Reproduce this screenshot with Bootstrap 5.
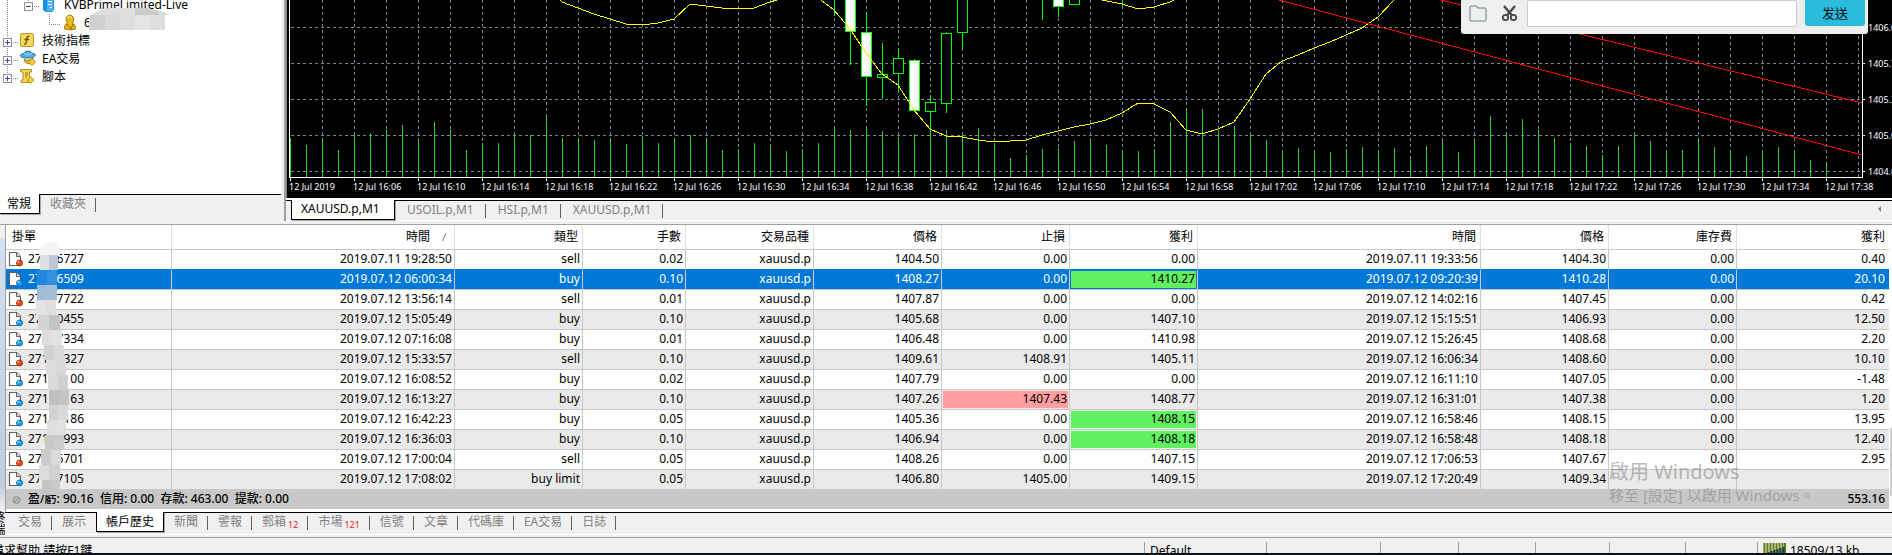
<!DOCTYPE html>
<html lang="zh-Hant">
<head>
<meta charset="utf-8">
<meta name="viewport" content="width=device-width, initial-scale=1">
<title>Trading terminal</title>
<link rel="stylesheet" href="https://cdn.jsdelivr.net/npm/bootstrap@5.3.0/dist/css/bootstrap.min.css">
<style>
  body { font: 12px/18px "Noto Sans", "Noto Sans CJK TC", sans-serif; color: #000; background: #f0f0f0; overflow: hidden; }
  a { color: inherit; text-decoration: none; }

  /* navigator */
  .navigator { width: 286px; border-right: 2px solid #a0a0a0; }
  .tree { height: 194px; width: 281px; background: #fff; overflow: hidden; }
  .tree ul { margin: -4px 0 0; }
  .tree li { height: 18px; display: flex; align-items: center; }
  .tree svg { flex: none; }
  .tree-name { margin-left: 6px; }
  .smear { left: 89px; top: 7px; }

  /* tab strips */
  .strip { border-top: 1px solid #000; color: #808080; }
  .strip a { position: relative; white-space: nowrap; }
  .strip a.idle::after { content: ""; position: absolute; right: 0; top: 3px; height: 14px; border-right: 1px solid #606060; }
  .strip a.current { color: #000; background: #fff; border: 1px solid #000; border-top: 0; margin-top: -1px; box-shadow: 1px 1px 0 #a8a8a8; }
  .nav-strip { width: 281px; height: 24px; }
  .nav-strip a { padding: 0 10px; height: 20px; line-height: 18px; }
  .nav-strip a.current { padding: 0 8px 0 7px; border-left: 0; line-height: 20px; }
  .chart-strip { height: 20px; padding-left: 5px; }
  .chart-strip a { padding: 0 12px; height: 18px; }
  .chart-strip a.current { padding: 0 12px 0 9px; height: 20px; width: 104px; }
  .term-strip { height: 23px; padding-left: 3px; border-bottom: 1px solid #fff; }
  .term-strip a { padding: 0 10px; height: 20px; line-height: 18px; }
  .term-strip a.current { line-height: 20px; padding: 0 9px; }
  .term-strip sub { color: #f01818; font-size: 9px; bottom: -2px; margin-left: 2px; }
  .arrow { right: 11px; top: 5px; border: 3px solid transparent; border-left: 0; border-right-color: #808080; }

  /* chart */
  .chart { background: #000; height: 198px; overflow: hidden; }
  .chart text { font-size: 9px; fill: #fff; }
  .sender { right: 24px; top: 0; width: 407px; height: 34px; padding: 0 3px 0 8px; background: #edf0ef; border-radius: 0 0 3px 3px; }
  .sender input { width: 270px; height: 27px; border: 1px solid #ccc; border-radius: 2px; background: #fff; margin-left: 8px; }
  .sender button { width: 60px; height: 26px; margin-left: 8px; border: 0; border-radius: 0 0 3px 3px; background: #2abcdc; font: 13px/24px "Noto Sans CJK SC", sans-serif; padding: 0; color: #111; }
  .sender .tool { width: 18px; padding: 0; border: 0; background: none; margin: 0 14px 0 0; height: 26px; }
  .sender .tool svg { display: block; }
  .sender .tool + .tool { margin-right: 0; }

  /* terminal */
  .terminal { border-top: 1px solid #a0a0a0; margin-top: 3px; }
  .caption { width: 5px; background: linear-gradient(#f0f0f0 13px, #d4e0f0 14px, #c0ccdb 260px, #f0f0f0 285px); overflow: hidden; }
  .caption span { position: absolute; bottom: 0; left: -9px; writing-mode: vertical-rl; font-size: 12px; line-height: 14px; }
  .history { background: #fff; border-left: 1px solid #a0a0a0; padding: 0 3px 3px 0; }
  .history table { table-layout: fixed; width: 100%; border-collapse: separate; border-spacing: 0; margin: 0; }
  .history th { height: 25px; font-weight: 400; padding: 0 4px 0 0; text-align: right; border-right: 1px solid #e0e0e0; border-bottom: 1px solid #c8c8c8; white-space: nowrap; }
  .history th:first-child { text-align: left; padding-left: 6px; }
  .history td { height: 20px; line-height: 18px; padding: 0 2px 1px 0; text-align: right; border-right: 1px solid #c8c8c8; border-bottom: 1px solid #c8c8c8; white-space: nowrap; }
  .history td:last-child, .history th:last-child { border-right: 0; padding-right: 4px; }
  .history tbody tr:nth-child(even) td { background: #eaeaea; }
  .history tbody tr.above td { border-bottom-color: #0078d7; }
  .history tbody tr.picked td { background: #0078d7; color: #fff; }
  .history tbody tr td.gain { background: #60f060; color: #000; box-shadow: inset 0 0 0 1px #e4f8e4; }
  .history tbody tr.picked td.gain { background: #60f060; color: #000; box-shadow: inset 0 0 0 1px #0078d7; }
  .history tbody tr td.loss { background: #ff9f9f; box-shadow: inset 0 0 0 1px #f6e4e4; }
  .history tfoot td { background: #c8c8c8; border: 0; height: 19px; font-weight: 500; }
  .history tfoot pre { font: inherit; margin: 0; overflow: visible; }
  .ticket { width: 56px; }
  .sorter { width: 20px; height: 10px; vertical-align: -1px; }
  .streak { left: 30px; top: 16px; }
  .activate { left: 1609px; top: 233px; color: rgba(120,120,120,.5); font-size: 20px; line-height: 28px; pointer-events: none; white-space: nowrap; }
  .activate small { display: block; font-size: 15px; line-height: 18px; }
  .thumb { right: 0; top: 203px; width: 2px; height: 68px; background: #cdcdcd; }

  /* status bar */
  .status { height: 18px; margin-top: 2px; border-top: 1px solid #a0a0a0; border-bottom: 2px solid #0c1218; overflow: hidden; }
  .status > div { border-left: 1px solid #a0a0a0; margin-top: 4px; height: 18px; padding-left: 5px; white-space: nowrap; flex: none; }
  .status > div:first-child { border: 0; padding: 0; text-indent: -8px; flex: 1 1 0; }
</style>
</head>
<body>
<main class="d-flex flex-column">
  <div class="d-flex">
    <aside class="navigator flex-shrink-0">
      <div class="tree position-relative">
        <ul class="list-unstyled">
          <li><svg width="58" height="18"><path d="M7.5 4V18M28.5 4V6" stroke="#888" stroke-dasharray="1 1"/><path d="M34 10.500H40" stroke="#888" stroke-dasharray="1 1"/><rect x="24.500" y="6.500" width="8" height="8" fill="#fff" stroke="#909090"/><path d="M26 10.500H31" stroke="#3050a0"/><path d="M43 3L46 1H54V14L52 16H46L43 14Z" fill="#1a8fe0"/><path d="M47 2H53V15H47Z" fill="#4cb4f4"/><path d="M48 5.500H52M48 8.500H52M50 11.500H52" stroke="#e8f6ff"/></svg><span class="tree-name">KVBPrimeLimited-Live</span></li>
          <li><svg width="78" height="18"><path d="M7.500 0V18M49.500 0V10.500H61" fill="none" stroke="#888" stroke-dasharray="1 1"/><path d="M64.500 15Q64 10 67.500 9Q65 6 66.500 3Q70 -1 73 3Q74.500 6 72.500 9Q76 10 75.500 15Q70 17 64.500 15Z" fill="#e8bc20" stroke="#a87c08"/><path d="M67 4Q70 1 72 4" stroke="#fff0a0" fill="none"/><path d="M67 10L71 15L73 10" stroke="#8c6800" fill="none"/></svg><span class="tree-name">6</span></li>
          <li><svg width="36" height="18"><path d="M7.500 0V18M13 10.500H19" stroke="#888" stroke-dasharray="1 1"/><rect x="3.500" y="6.500" width="8" height="8" fill="#fff" stroke="#909090"/><path d="M5 10.500H10M7.500 8V13" stroke="#3050a0"/><rect x="20.500" y="1.500" width="13" height="13" rx="1.500" fill="#f5d860" stroke="#c09a20"/><path d="M29.500 4.500Q27.500 3.500 27 6L26 11Q25.500 12.500 24 12M24.500 7.500H29" fill="none" stroke="#705000" stroke-width="1.300"/></svg><span class="tree-name">技術指標</span></li>
          <li><svg width="36" height="18"><path d="M7.500 0V18M13 10.500H19" stroke="#888" stroke-dasharray="1 1"/><rect x="3.500" y="6.500" width="8" height="8" fill="#fff" stroke="#909090"/><path d="M5 10.500H10M7.500 8V13" stroke="#3050a0"/><path d="M24 9Q28 12 33 8L32 13Q28 15 25 12Z" fill="#e8c030" stroke="#a88010"/><path d="M20 5.500Q21 8 28 8Q35 8 35.500 4.500Q34 3 32 3.500Q31 1 28 1Q25 1 24 3.500Q21 3.500 20 5.500Z" fill="#50b0e0" stroke="#2478a8"/><path d="M24.500 3.500Q28 6 32 3.500" fill="none" stroke="#a8e0f8"/><path d="M32 8.500L35.500 12L32 15.500L28.500 12Z" fill="#f4d040" stroke="#b08808"/></svg><span class="tree-name">EA交易</span></li>
          <li><svg width="36" height="18"><path d="M7.500 0V6M13 10.500H19" stroke="#888" stroke-dasharray="1 1"/><rect x="3.500" y="6.500" width="8" height="8" fill="#fff" stroke="#909090"/><path d="M5 10.500H10M7.500 8V13" stroke="#3050a0"/><path d="M20.500 1.500H31.500V4H29.500V11H31V14.500H21V12H23V4H20.500Z" fill="#f5d860" stroke="#b89020"/><path d="M25 5H28M25 7H28M25 9H27" stroke="#907000"/><path d="M30.500 8.500L34 12L30.500 15.500L27 12Z" fill="#f4d040" stroke="#b08808"/></svg><span class="tree-name">腳本</span></li>
        </ul>
        <svg class="smear position-absolute" width="84" height="26"><path d="M1 10Q8 1 22 1H56Q74 3 81 8H76V23H1V26H0V8Z" fill="#dedede"/><path d="M1 8H16V23H1Z" fill="#d0d0d2"/><path d="M16 8H31V23H16Z" fill="#d8d8d6"/><path d="M46 1H56L70 4V8H46Z" fill="#cccccf"/><path d="M46 8H61V23H46Z" fill="#e6e4e6"/></svg>
      </div>
      <nav class="strip nav-strip d-flex">
        <a class="current" href="#">常規</a><a class="idle" href="#">收藏夾</a>
      </nav>
    </aside>

    <section class="flex-grow-1 overflow-hidden">
      <div class="chart position-relative">
        <svg id="plot" class="d-block w-100" height="198" viewBox="286 0 1606 198" preserveAspectRatio="xMaxYMin slice" shape-rendering="crispEdges"></svg>
        <form class="sender position-absolute d-flex">
          <button class="tool" type="button" aria-label="Folder"><svg width="18" height="26"><path d="M1 8Q1 6 3 6H7L9 8H15.500Q17 8 17 10V19.500Q17 21 15.500 21H3Q1 21 1 19.500Z" fill="none" stroke="#98a4ac" stroke-width="1.600"/></svg></button>
          <button class="tool" type="button" aria-label="Cut"><svg width="18" height="26"><path d="M3 6L11.500 16M14 6L5.500 16" stroke="#484848" stroke-width="2.400" fill="none"/><circle cx="4.500" cy="17.500" r="2.700" fill="none" stroke="#484848" stroke-width="1.800"/><circle cx="12.500" cy="17.500" r="2.700" fill="none" stroke="#484848" stroke-width="1.800"/></svg></button>
          <input type="text" aria-label="訊息">
          <button type="button">发送</button>
        </form>
      </div>
      <div class="bg-white" style="height:2px"></div>
      <nav class="strip chart-strip d-flex position-relative">
        <a class="current" href="#">XAUUSD.p,M1</a><a class="idle" href="#">USOIL.p,M1</a><a class="idle" href="#">HSI.p,M1</a><a class="idle" href="#">XAUUSD.p,M1</a>
        <span class="arrow position-absolute"></span>
      </nav>
      <div class="bg-white" style="height:1px"></div>
    </section>
  </div>

  <section class="terminal d-flex position-relative">
    <div class="caption position-relative flex-shrink-0"><span>終端</span></div>
    <div class="flex-grow-1 overflow-hidden">
      <div class="history position-relative">
        <table>
          <colgroup><col style="width:166px"><col><col style="width:128px"><col style="width:103px"><col style="width:128px"><col style="width:128px"><col style="width:128px"><col style="width:128px"><col style="width:283px"><col style="width:128px"><col style="width:128px"><col style="width:152px"></colgroup>
          <thead><tr><th>掛單</th><th>時間<svg class="sorter"><path d="M12.500 9L16 1" stroke="#808080"/></svg></th><th>類型</th><th>手數</th><th>交易品種</th><th>價格</th><th>止損</th><th>獲利</th><th>時間</th><th>價格</th><th>庫存費</th><th>獲利</th></tr></thead>
          <tbody id="deals"></tbody>
          <tfoot><tr><td colspan="11"><div class="d-flex align-items-center"><svg width="22" height="18"><circle cx="10.500" cy="10" r="3.500" fill="#b8b8b8" stroke="#909090"/><path d="M8 12.500L13 7.500" stroke="#909090"/></svg><pre>盈/虧: 90.16  信用: 0.00  存款: 463.00  提款: 0.00</pre></div></td><td>553.16</td></tr></tfoot>
        </table>
      </div>
      <nav class="strip term-strip d-flex">
        <a class="idle" href="#">交易</a><a href="#">展示</a><a class="current" href="#">帳戶歷史</a><a class="idle" href="#">新聞</a><a class="idle" href="#">警報</a><a class="idle" href="#">郵箱<sub>12</sub></a><a class="idle" href="#">市場<sub>121</sub></a><a class="idle" href="#">信號</a><a class="idle" href="#">文章</a><a class="idle" href="#">代碼庫</a><a class="idle" href="#">EA交易</a><a class="idle" href="#">日誌</a>
      </nav>
    </div>
    <svg class="streak position-absolute" id="streak" width="45" height="256"></svg>
    <div class="activate position-absolute">啟用 Windows<small>移至 [設定] 以啟用 Windows。</small></div>
    <div class="thumb position-absolute"></div>
  </section>

  <footer class="status d-flex">
    <div>尋求幫助,請按F1鍵</div>
    <div style="width:122px">Default</div><div style="width:114px"></div><div style="width:78px"></div><div style="width:77px"></div><div style="width:74px"></div><div style="width:76px"></div><div style="width:72px"></div>
    <div class="d-flex" style="width:135px"><svg width="23" height="14" class="me-1 flex-shrink-0"><path d="M1.500 1V12M4.500 1V12M7.500 1V12M10.500 1V12M13.500 1V12M16.500 1V12M19.500 1V12M22 1V12" stroke="#607808" stroke-width="2"/><path d="M5.500 14V10M8.500 14V9M11.500 14V8M14.500 14V7M17.500 14V6M20.500 14V5" stroke="#0c4058" stroke-width="2"/></svg><span>18509/13 kb</span></div>
  </footer>
</main>

<script src="https://cdn.jsdelivr.net/npm/bootstrap@5.3.0/dist/js/bootstrap.bundle.min.js"></script>
<script>
  // account history: ticket start, ticket end, opened, side, lots, price, stop, target, closed, price, swap, profit
  const deals = [
    ['27','6727','2019.07.11 19:28:50','sell','0.02','1404.50','0.00','0.00','2019.07.11 19:33:56','1404.30','0.00','0.40'],
    ['27','6509','2019.07.12 06:00:34','buy','0.10','1408.27','0.00','1410.27','2019.07.12 09:20:39','1410.28','0.00','20.10'],
    ['27','7722','2019.07.12 13:56:14','sell','0.01','1407.87','0.00','0.00','2019.07.12 14:02:16','1407.45','0.00','0.42'],
    ['27','0455','2019.07.12 15:05:49','buy','0.10','1405.68','0.00','1407.10','2019.07.12 15:15:51','1406.93','0.00','12.50'],
    ['27','7334','2019.07.12 07:16:08','buy','0.01','1406.48','0.00','1410.98','2019.07.12 15:26:45','1408.68','0.00','2.20'],
    ['271','327','2019.07.12 15:33:57','sell','0.10','1409.61','1408.91','1405.11','2019.07.12 16:06:34','1408.60','0.00','10.10'],
    ['271','00','2019.07.12 16:08:52','buy','0.02','1407.79','0.00','0.00','2019.07.12 16:11:10','1407.05','0.00','-1.48'],
    ['271','63','2019.07.12 16:13:27','buy','0.10','1407.26','1407.43','1408.77','2019.07.12 16:31:01','1407.38','0.00','1.20'],
    ['271','186','2019.07.12 16:42:23','buy','0.05','1405.36','0.00','1408.15','2019.07.12 16:58:46','1408.15','0.00','13.95'],
    ['271','993','2019.07.12 16:36:03','buy','0.10','1406.94','0.00','1408.18','2019.07.12 16:58:48','1408.18','0.00','12.40'],
    ['27','6701','2019.07.12 17:00:04','sell','0.05','1408.26','0.00','1407.15','2019.07.12 17:06:53','1407.67','0.00','2.95'],
    ['27','7105','2019.07.12 17:08:02','buy limit','0.05','1406.80','1405.00','1409.15','2019.07.12 17:20:49','1409.34','','']
  ];
  // row-column of cells closed at their target or stop
  const marks = { '1-7': 'gain', '8-7': 'gain', '9-7': 'gain', '7-6': 'loss' };
  document.getElementById('deals').innerHTML = deals.map((d, r) => {
    const dot = d[3] === 'sell' ? ['#e84818', '#a02800'] : ['#18a0f0', '#0868b0'];
    const icon = `<svg width="22" height="18"><path d="M3.500 2.500H10.500L14.500 6.500V15.500H3.500Z" fill="#fff" stroke="#606060" stroke-width="1.200" stroke-linejoin="round"/><path d="M10.500 2.500V6.500H14.500" fill="#ddd" stroke="#606060"/><circle cx="13.500" cy="13" r="3" fill="${dot[0]}" stroke="${dot[1]}" stroke-width=".8"/><circle cx="12.500" cy="12" r="1" fill="#fff" opacity=".6"/></svg>`;
    const ticket = `<td><div class="d-flex align-items-center">${icon}<span class="ticket d-flex justify-content-between"><span>${d[0]}</span><span>${d[1]}</span></span></div></td>`;
    const rest = [d[2], d[3], d[4], 'xauusd.p', ...d.slice(5)].map((v, i) => {
      const mark = marks[`${r}-${i + 1}`];
      return `<td${mark ? ` class="${mark}"` : ''}>${v}</td>`;
    });
    return `<tr class="${r === 0 ? 'above' : r === 1 ? 'picked' : ''}">${ticket}${rest.join('')}</tr>`;
  }).join('');

  // blurred streak across the ticket numbers: top, left, right, colours
  const streak = [[14,40,58,'#dcdfe4','#bfc8d2'],[29,37,57,'#2288dd','#348fe0'],[44,37,57,'#9dbbd6','#a4bed6'],[59,36,56,'#e3e3e5','#dedee0'],[74,38,60,'#d4d4d6','#c4c4c6'],[89,42,62,'#dedede','#e2e2e0'],[104,44,64,'#d2d2d0','#dadad8'],[119,46,66,'#dcdcdc','#d8d8da'],[134,48,68,'#dadada','#d0d0d0'],[149,49,69,'#c0c0be','#c4c4c2'],[164,49,68,'#d2d2d0','#d9d9da'],[179,47,66,'#dedede','#e0e0de'],[194,45,64,'#c8c8c8','#ccccca'],[209,41,61,'#cccccc','#dadada'],[224,39,60,'#dcdcdc','#d2d2d0'],[239,42,60,'#c4c4c4','#c8c8c8']];
  document.getElementById('streak').innerHTML = '<path d="M9 15V11Q12 1 20 1Q29 1 30 11V15Z" fill="#f4f4f4"/>' + streak.map(([y, a, b, c, d]) =>
    `<path d="M${a - 30} ${y}H${(a + b) / 2 - 30 | 0}V${y + 15}H${a - 30}Z" fill="${c}"/><path d="M${(a + b) / 2 - 30 | 0} ${y}H${b - 30}V${y + 15}H${(a + b) / 2 - 30 | 0}Z" fill="${d}"/>`).join('');

  // chart
  let s = '';
  for (let x = 322; x < 1862; x += 32) s += `<path d="M${x}.5 0V177" stroke="#778899" stroke-dasharray="3 3"/>`;
  for (let y = 27; y < 177; y += 36) s += `<path d="M291 ${y}.5H1862" stroke="#778899" stroke-dasharray="3 3"/><path d="M1863 ${y}.5H1865" stroke="#fff"/>`;
  const volume = [138,145,139,150,135,133,130,125,141,122,130,150,143,143,135,135,117,138,138,140,138,144,136,143,139,135,139,150,149,143,146,151,149,143,128,130,128,131,137,134,126,130,132,128,143,158,155,149,148,141,141,145,150,151,149,122,109,109,130,126,134,140,151,148,152,152,149,147,151,148,159,146,141,152,141,116,132,119,130,138,143,146,155,146,133,141,151,150,138,147,150,156,151,147,151,160,163];
  volume.forEach((t, i) => s += `<path d="M${290 + i * 16}.5 ${t}V177" stroke="#32cd32"/>`);
  // candles: centre, high, low, top, bottom, falling
  [[834,-5,16],[850,-5,65,-5,31,1],[866,13,106,32,76,1],[882,43,99,74,77,0],[898,49,92,58,73,0],[914,59,112,60,110,1],[930,95,130,102,111,0],[946,32,113,33,103,0],[962,-5,49,-5,32,0],[1042,-5,20],[1058,-5,17,-5,6,1],[1074,-5,4,-5,4,0],[1122,-5,7]].forEach(([x, h, l, t, b, f]) => {
    s += `<path d="M${x}.5 ${h}V${l}" stroke="#0f0"/>`;
    if (t !== undefined) s += `<rect x="${x - 5}.5" y="${t + .5}" width="10" height="${b - t}" fill="${f ? '#fff' : '#000'}" stroke="#0f0"/>`;
  });
  ['560,0 562,2 578,8 594,14 610,19 626,24 642,25 658,23 674,19 690,4 706,6 722,8 738,9 754,8 770,2 777,0',
   '821,0 834,10 850,29 866,53 882,74 898,85 914,110 930,129 946,136 962,137 978,140 994,142 1010,141 1026,140 1042,135 1058,131 1074,127 1090,124 1106,120 1122,113 1138,103 1154,104 1170,112 1186,130 1202,134 1218,129 1234,122 1250,99 1266,74 1282,61 1298,55 1314,48 1330,42 1346,35 1362,28 1378,17 1394,0',
   '1102,0 1122,4 1138,9 1154,7 1170,2 1174,0'].forEach(p => s += `<polyline points="${p}" fill="none" stroke="#ff0"/>`);
  s += '<path d="M1279 0L1862 155M1441 0L1862 103" stroke="#f00"/><path d="M289.500 0V177.500H1862.500V0" fill="none" stroke="#fff"/><path d="M286.500 0V198" stroke="#808080"/>';
  for (let i = 0; i < 25; i++) {
    const min = 2 + i * 4, x = 290 + i * 64;
    const label = i ? `12 Jul ${16 + (min >= 60)}:${String(min % 60).padStart(2, '0')}` : '12 Jul 2019';
    s += `<path d="M${x}.5 178V181" stroke="#fff"/><text x="${x - 1}" y="190">${label}</text>`;
  }
  ['1406.05', '1405.70', '1405.35', '1405.00', '1404.65'].forEach((p, i) => s += `<text x="1868" y="${31 + i * 36}">${p}</text>`);
  document.getElementById('plot').innerHTML = s;
</script>
</body>
</html>
